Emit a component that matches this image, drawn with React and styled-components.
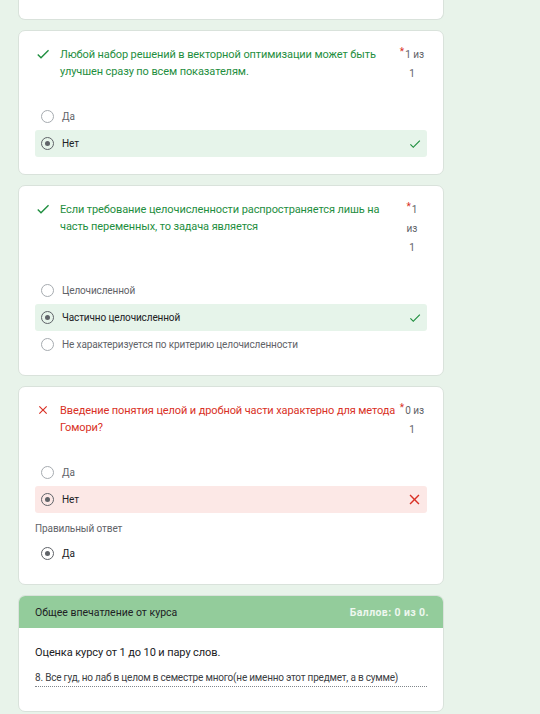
import React from 'react';
import styled, { createGlobalStyle } from 'styled-components';

const GlobalStyle = createGlobalStyle`
  html, body {
    margin: 0;
    padding: 0;
    background: #e8f3ea;
    font-family: Roboto, "Liberation Sans", Arial, sans-serif;
  }
`;

const CheckIcon = ({ size = 16, color = '#1e8e3e' }) => (
  <svg width={size} height={size} viewBox="0 0 24 24">
    <path fill={color} d="M9 16.17L4.83 12l-1.42 1.41L9 19 21 7l-1.41-1.41z" />
  </svg>
);

const CrossIcon = ({ size = 16, color = '#d93025' }) => (
  <svg width={size} height={size} viewBox="0 0 24 24">
    <path
      fill={color}
      d="M19 6.41L17.59 5 12 10.59 6.41 5 5 6.41 10.59 12 5 17.59 6.41 19 12 13.41 17.59 19 19 17.59 13.41 12z"
    />
  </svg>
);

const questions = [
  {
    id: 1,
    correct: true,
    text: 'Любой набор решений в векторной оптимизации может быть улучшен сразу по всем показателям.',
    points: ['1 из', '1'],
    options: [
      { label: 'Да' },
      { label: 'Нет', selected: true, mark: 'ok' },
    ],
  },
  {
    id: 2,
    correct: true,
    text: 'Если требование целочисленности распространяется лишь на часть переменных, то задача является',
    points: ['1', 'из', '1'],
    options: [
      { label: 'Целочисленной' },
      { label: 'Частично целочисленной', selected: true, mark: 'ok' },
      { label: 'Не характеризуется по критерию целочисленности' },
    ],
  },
  {
    id: 3,
    correct: false,
    text: 'Введение понятия целой и дробной части характерно для метода Гомори?',
    points: ['0 из', '1'],
    options: [
      { label: 'Да' },
      { label: 'Нет', selected: true, mark: 'bad' },
    ],
    answer: 'Да',
  },
];

const Option = ({ label, selected, mark }) => (
  <OptionRow $mark={mark}>
    <Radio $selected={selected} />
    <OptionLabel $selected={selected}>{label}</OptionLabel>
    <MarkSlot>
      {mark === 'ok' && <CheckIcon size={14} />}
      {mark === 'bad' && <CrossIcon size={17} />}
    </MarkSlot>
  </OptionRow>
);

const Question = ({ correct, text, points, options, answer }) => (
  <Card>
    <QuestionHead>
      <HeadIcon>{correct ? <CheckIcon /> : <CrossIcon size={14} />}</HeadIcon>
      <QuestionText $correct={correct}>{text}</QuestionText>
      <Points>
        {points.map((line, i) => (
          <PointsLine key={i}>
            {i === 0 && <Star>*</Star>}
            {line}
          </PointsLine>
        ))}
      </Points>
    </QuestionHead>
    <Options>
      {options.map(o => (
        <Option key={o.label} {...o} />
      ))}
    </Options>
    {answer && (
      <>
        <AnswerCaption>Правильный ответ</AnswerCaption>
        <Option label={answer} selected />
      </>
    )}
  </Card>
);

export default function App() {
  return (
    <Page>
      <GlobalStyle />
      <CardStub />
      {questions.map(q => (
        <Question key={q.id} {...q} />
      ))}
      <SectionCard>
        <SectionHead>
          <SectionTitle>Общее впечатление от курса</SectionTitle>
          <SectionScore>Баллов: 0 из 0.</SectionScore>
        </SectionHead>
        <SectionBody>
          <Prompt>Оценка курсу от 1 до 10 и пару слов.</Prompt>
          <Reply>8. Все гуд, но лаб в целом в семестре много(не именно этот предмет, а в сумме)</Reply>
        </SectionBody>
      </SectionCard>
    </Page>
  );
}

const Page = styled.div`
  width: 540px;
  height: 714px;
  overflow: hidden;
  box-sizing: border-box;
  padding-left: 18px;
  display: flex;
  flex-direction: column;
  gap: 10px;
`;

const Card = styled.div`
  width: 426px;
  flex-shrink: 0;
  background: #fff;
  border: 1px solid #d9e2db;
  border-radius: 7px;
  padding: 14px 16px 17px 16px;
  box-sizing: border-box;
`;

const CardStub = styled.div`
  width: 426px;
  height: 20px;
  flex-shrink: 0;
  background: #fff;
  border: 1px solid #d9e2db;
  border-top: none;
  border-radius: 0 0 7px 7px;
  box-sizing: border-box;
`;

const QuestionHead = styled.div`
  display: flex;
  align-items: flex-start;
`;

const HeadIcon = styled.div`
  width: 16px;
  height: 18px;
  display: flex;
  align-items: center;
  justify-content: center;
  margin-right: 9px;
  flex-shrink: 0;
`;

const QuestionText = styled.div`
  flex: 1;
  font-size: 11px;
  line-height: 17px;
  letter-spacing: -0.1px;
  color: #${p => (p.$correct ? '1e8e3e' : 'd93025')};
  padding-top: 1px;
`;

const Points = styled.div`
  width: 30px;
  flex-shrink: 0;
  display: flex;
  flex-direction: column;
  align-items: center;
  font-size: 10px;
  line-height: 19px;
  color: #5f6368;
`;

const PointsLine = styled.div`
  white-space: nowrap;
`;

const Star = styled.span`
  position: relative;
  top: -3px;
  line-height: 0;
  color: #d93025;
  font-size: 10px;
  margin-right: 1px;
`;

const Options = styled.div`
  margin-top: 20px;
  display: flex;
  flex-direction: column;
`;

const OptionRow = styled.div`
  height: 27px;
  display: flex;
  align-items: center;
  padding: 0 4px 0 6px;
  border-radius: 3px;
  background: ${p =>
    p.$mark === 'ok' ? '#e6f4ea' : p.$mark === 'bad' ? '#fce8e6' : 'transparent'};
`;

const Radio = styled.div`
  width: 13px;
  height: 13px;
  box-sizing: border-box;
  border-radius: 50%;
  border: ${p => (p.$selected ? '1.5px solid #5f6368' : '1px solid #a6abb0')};
  position: relative;
  flex-shrink: 0;
  &::after {
    content: '';
    display: ${p => (p.$selected ? 'block' : 'none')};
    position: absolute;
    left: 50%;
    top: 50%;
    width: 5px;
    height: 5px;
    margin: -2.5px 0 0 -2.5px;
    border-radius: 50%;
    background: #5f6368;
  }
`;

const OptionLabel = styled.div`
  flex: 1;
  margin-left: 8px;
  font-size: 10px;
  letter-spacing: -0.12px;
  color: ${p => (p.$selected ? '#202124' : '#5f6368')};
`;

const MarkSlot = styled.div`
  width: 17px;
  height: 17px;
  display: flex;
  align-items: center;
  justify-content: center;
`;

const AnswerCaption = styled.div`
  margin: 9px 0 4px;
  font-size: 10px;
  line-height: 14px;
  letter-spacing: -0.1px;
  color: #5f6368;
`;

const SectionCard = styled.div`
  width: 426px;
  flex-shrink: 0;
  box-sizing: border-box;
  background: #fff;
  border: 1px solid #d9e2db;
  border-radius: 7px;
  overflow: hidden;
`;

const SectionHead = styled.div`
  height: 32px;
  background: #93cc9b;
  display: flex;
  align-items: center;
  justify-content: space-between;
  padding: 0 14px 0 16px;
`;

const SectionTitle = styled.div`
  font-size: 10.5px;
  color: #202124;
`;

const SectionScore = styled.div`
  font-size: 10.5px;
  font-weight: 700;
  letter-spacing: 0.4px;
  color: #eef7ef;
`;

const SectionBody = styled.div`
  padding: 17px 16px 24px;
`;

const Prompt = styled.div`
  font-size: 11px;
  line-height: 16px;
  letter-spacing: -0.1px;
  color: #202124;
`;

const Reply = styled.div`
  margin-top: 10px;
  font-size: 10px;
  line-height: 14px;
  letter-spacing: -0.2px;
  color: #3c4043;
  padding-bottom: 1px;
  border-bottom: 1px dotted #80868b;
`;
